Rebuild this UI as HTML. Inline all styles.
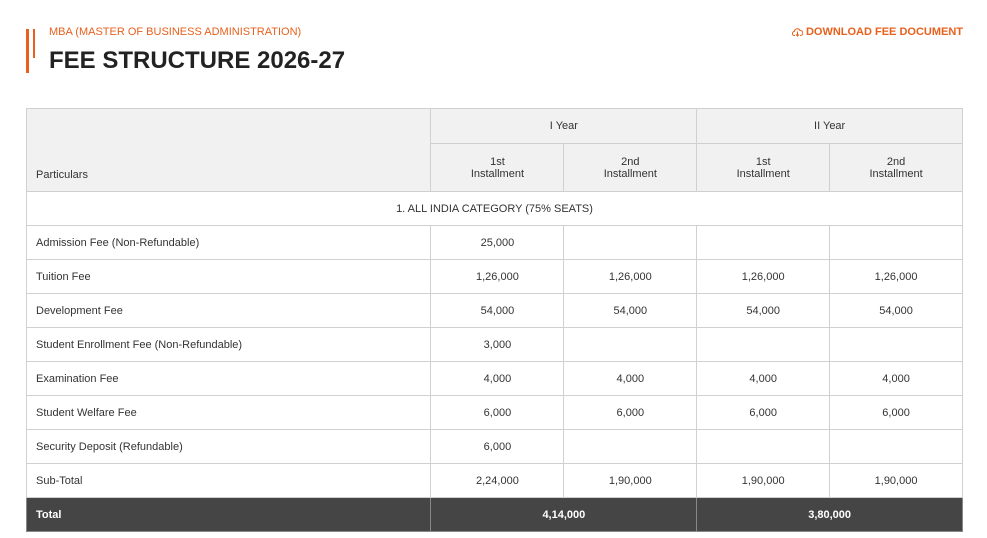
<!DOCTYPE html>
<html><head><meta charset="utf-8"><style>
body{margin:0;background:#fff;font-family:"Liberation Sans",sans-serif;color:#333;width:987px;height:538px;position:relative;overflow:hidden}
.b1{position:absolute;left:26px;top:29px;width:3px;height:44px;background:#e8601c}
.b2{position:absolute;left:33px;top:29px;width:2px;height:29px;background:#e8601c}
.sub{position:absolute;left:49px;top:26px;font-size:11px;color:#e8601c;white-space:nowrap}
.title{position:absolute;left:49px;top:47px;font-size:24px;font-weight:bold;color:#222;white-space:nowrap}
.dl{position:absolute;right:24px;top:26px;font-size:11px;color:#e8601c;font-weight:bold;white-space:nowrap;display:flex;align-items:center;gap:3px}
table{position:absolute;left:26px;top:108px;border-collapse:collapse;width:937px;font-size:11px}
td{border:1px solid #d0d0d0;text-align:center;height:33px;padding:0;color:#333}
td.l{text-align:left;padding-left:9px}
thead td{background:#f1f1f1}
tr.tot td{background:#454545;color:#fff;font-weight:bold;border-color:#888}
</style></head><body>
<div class="b1"></div><div class="b2"></div>
<div class="sub">MBA (MASTER OF BUSINESS ADMINISTRATION)</div>
<div class="title">FEE STRUCTURE 2026-27</div>
<div class="dl"><svg width="11" height="10" viewBox="0 0 11 10"><path d="M3 8.5H2.5A2 2 0 0 1 2.3 4.5 3 3 0 0 1 8 3.5 2.3 2.3 0 0 1 8.5 8.5H8M5.5 4.5V9M4 7.5l1.5 1.5 1.5-1.5" fill="none" stroke="#e8601c" stroke-width="1"/></svg>DOWNLOAD FEE DOCUMENT</div>
<table>
<colgroup><col style="width:405px"><col style="width:133px"><col style="width:133px"><col style="width:133px"><col style="width:133px"></colgroup>
<thead>
<tr><td class="l" rowspan="2" style="vertical-align:bottom;padding-bottom:10px">Particulars</td><td colspan="2" style="height:34px">I Year</td><td colspan="2">II Year</td></tr>
<tr><td style="height:47px">1st<br>Installment</td><td>2nd<br>Installment</td><td>1st<br>Installment</td><td>2nd<br>Installment</td></tr>
</thead>
<tbody>
<tr><td colspan="5">1. ALL INDIA CATEGORY (75% SEATS)</td></tr>
<tr><td class="l">Admission Fee (Non-Refundable)</td><td>25,000</td><td></td><td></td><td></td></tr>
<tr><td class="l">Tuition Fee</td><td>1,26,000</td><td>1,26,000</td><td>1,26,000</td><td>1,26,000</td></tr>
<tr><td class="l">Development Fee</td><td>54,000</td><td>54,000</td><td>54,000</td><td>54,000</td></tr>
<tr><td class="l">Student Enrollment Fee (Non-Refundable)</td><td>3,000</td><td></td><td></td><td></td></tr>
<tr><td class="l">Examination Fee</td><td>4,000</td><td>4,000</td><td>4,000</td><td>4,000</td></tr>
<tr><td class="l">Student Welfare Fee</td><td>6,000</td><td>6,000</td><td>6,000</td><td>6,000</td></tr>
<tr><td class="l">Security Deposit (Refundable)</td><td>6,000</td><td></td><td></td><td></td></tr>
<tr><td class="l">Sub-Total</td><td>2,24,000</td><td>1,90,000</td><td>1,90,000</td><td>1,90,000</td></tr>
<tr class="tot"><td class="l">Total</td><td colspan="2">4,14,000</td><td colspan="2">3,80,000</td></tr>
</tbody></table>
</body></html>
